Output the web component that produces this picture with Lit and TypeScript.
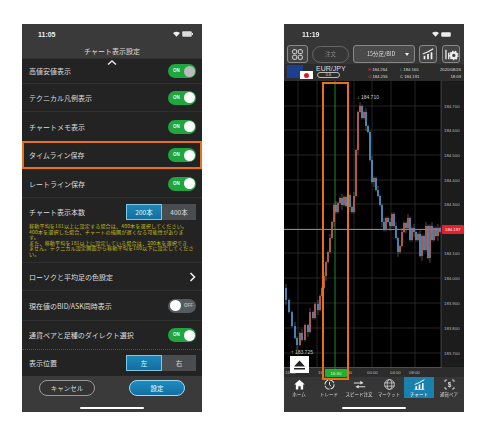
import { LitElement, html, css, svg } from "lit";
import { customElement } from "lit/decorators.js";

const path: [number, number][] = [
  [284,288],[286,300],[289,312],[292,326],[295,338],[297,345],[300,333],[302,340],[305,325],[308,332],[310,312],[313,318],[315,304],[318,310],[320,296],[322,288],[324,276],[326,262],[328,252],[330,238],[332,222],[334,205],[336,212],[338,203],[340,198],[342,205],[344,197],[346,206],[348,195],[350,207],[352,212],[354,196],[356,150],[358,112],[360,106],[362,118],[364,112],[366,126],[368,132],[370,160],[372,182],[374,178],[376,190],[378,196],[380,205],[382,222],[384,230],[386,218],[388,222],[390,226],[392,214],[394,226],[396,238],[398,252],[400,246],[402,232],[404,223],[406,228],[408,218],[410,240],[412,228],[414,232],[416,240],[418,234],[420,256],[422,236],[424,250],[426,226],[428,258],[430,226],[432,240],[434,228],[436,236],[438,228],[440,232],
];
const prices = [[106,"184.700"],[130,"184.600"],[155,"184.500"],[180,"184.400"],[204,"184.300"],[253,"184.100"],[278,"184.000"],[303,"183.900"],[328,"183.800"],[353,"183.700"]] as const;
const hGrid = [106,130,155,180,204,229,253,278,303,328,353];
const vGrid = [298,317,354,372,391,415];
const xLabels = [[285,"16:00"],[318,"16:"],[346,":00"],[367,"00:00"],[390,"04:00"],[409,"08:00"]] as const;

function chart() {
  const candles = path.slice(1).map(([x, y], i) => {
    const prev = path[i][1];
    const up = y < prev;
    const wickT = Math.min(y, prev) - (i % 3 === 0 ? 4 : 1.5);
    const wickB = Math.max(y, prev) + (i % 4 === 0 ? 5 : 1.5);
    return svg`<line x1=${x} x2=${x} y1=${wickT} y2=${wickB} stroke="#999" stroke-width="0.5"/>
      <rect x=${x - 0.85} y=${Math.min(y, prev)} width="1.7" height=${Math.max(Math.abs(y - prev), 1)} fill=${up ? "#c9604e" : "#4a94d0"}/>`;
  });
  return svg`<svg class="chart" viewBox="284 81 180 296" width="180" height="296">
    <rect x="284" y="81" width="180" height="296" fill="#000"/>
    <rect x="441" y="81" width="23" height="296" fill="#1c1c1c"/>
    <rect x="284" y="367" width="180" height="10" fill="#2c2c2c"/>
    <line x1="441" x2="441" y1="81" y2="368" stroke="#666" stroke-width="0.6"/>
    <line x1="284" x2="441" y1="367.5" y2="367.5" stroke="#666" stroke-width="0.6"/>
    ${hGrid.map((y) => svg`<line x1="284" x2="441" y1=${y} y2=${y} stroke="#333" stroke-width="0.7"/>`)}
    ${vGrid.map((x) => svg`<line x1=${x} x2=${x} y1="81" y2="367" stroke="#333" stroke-width="0.7"/>`)}
    <line x1="335" x2="335" y1="81" y2="369" stroke="#1f8a2c" stroke-width="1"/>
    <line x1="284" x2="441" y1="229.5" y2="229.5" stroke="#d99a5f" stroke-width="0.8"/>
    ${candles}
    <text x="357" y="99" class="ann">↓ 184.710</text>
    <text x="291" y="354" class="ann">↑ 183.725</text>
    ${prices.map(([y, t]) => svg`<text x="444" y=${y + 1.5} class="ax">${t}</text>`)}
    <rect x="442" y="225" width="22" height="9" rx="1" fill="#e3202c"/>
    <text x="445" y="231.3" class="ax cur">184.197</text>
    ${xLabels.map(([x, t]) => svg`<text x=${x} y="373.5" class="ax">${t}</text>`)}
    <rect x="325" y="369" width="22" height="8" rx="1" fill="#22b02e"/>
    <text x="336" y="375" class="ax lab" text-anchor="middle">16:30</text>
    <rect x="290" y="356" width="19" height="17" fill="#fff"/>
    <path d="M294 366.5 L299.5 360.5 L305 366.5 Z M294 368 H305 V369.5 H294 Z" fill="#222"/>
  </svg>`;
}

const toggle = (on = true, dim = false) => html`<span class="tg ${on ? "on" : "off"} ${dim ? "dim" : ""}"><i>${on ? "ON" : "OFF"}</i><b></b></span>`;

const tabIcons = [
  svg`<path d="M8 2 L1.5 8 H3.5 V14 H6.5 V10 H9.5 V14 H12.5 V8 H14.5 Z" fill="#fff"/>`,
  svg`<circle cx="8" cy="8" r="5.6" fill="none" stroke="#ddd" stroke-width="1.3" stroke-dasharray="7 1.5"/><path d="M8 4.8 V8.4 L10 10" fill="none" stroke="#ddd" stroke-width="1.2"/>`,
  svg`<path d="M1 5.5 H9 V3.5 L13 6 L9 8 V6.8 H1 Z M15 10 H7 V8.5 L3 10.8 L7 13 V11.5 H15 Z" fill="#ddd"/>`,
  svg`<circle cx="8" cy="8" r="6" fill="none" stroke="#ddd" stroke-width="1"/><ellipse cx="8" cy="8" rx="2.8" ry="6" fill="none" stroke="#ddd" stroke-width="0.9"/><path d="M2 6 H14 M2 10 H14" stroke="#ddd" stroke-width="0.9"/>`,
  svg`<path d="M2 14 H14" stroke="#fff" stroke-width="1"/><path d="M3 10 H5 V13.5 H3 Z M7 8 H9 V13.5 H7 Z M11 6 H13 V13.5 H11 Z" fill="#fff"/><path d="M2 8 Q8 6 14 2" fill="none" stroke="#fff" stroke-width="1.2"/>`,
  svg`<path d="M5 2.5 H2.5 V5 M11 2.5 H13.5 V5 M5 13.5 H2.5 V11 M11 13.5 H13.5 V11" fill="none" stroke="#ddd" stroke-width="1.1"/><text x="8" y="10.5" text-anchor="middle" font-size="8" font-weight="700" fill="#ddd" font-family="Liberation Sans, sans-serif">$</text>`,
];
const tabs = ["ホーム", "トレード", "スピード注文", "マーケット", "チャート", "通貨ペア"];

@customElement("app-root")
export class AppRoot extends LitElement {
  static styles = css`
    :host { display: block; width: 500px; height: 439px; background: #fff; overflow: hidden;
      font-family: "Noto Sans CJK JP", "Liberation Sans", sans-serif; }
    .page { display: flex; padding: 24px 0 0 22px; gap: 82px; filter: blur(0.4px); }
    .phone { position: relative; display: flex; flex-direction: column; width: 180px; height: 388px; overflow: hidden; color: #ddd; }
    .left { background: #3a3a3a; }
    .right { background: #363636; }
    .status { display: flex; align-items: center; justify-content: space-between; height: 20px; padding: 0 9px 0 16px;
      font: 700 7px "Liberation Sans", sans-serif; color: #eee; flex: none; }
    .right .status { padding: 0 12px 0 18px; }
    .sicons { display: flex; align-items: center; gap: 2px; }
    .title { height: 14px; flex: none; text-align: center; font-size: 7px; line-height: 14px; color: #ddd; }
    .list { flex: none; display: grid; grid-template-rows: 25px 28px 30px 28px 28px 65px 28px 30px 29px 27px; background: #232323; position: relative; }
    .row { display: flex; align-items: center; justify-content: space-between; padding: 0 6px 0 7px; font-size: 7px;
      border-top: 1px solid #2f2f2f; box-sizing: border-box; color: #ddd; }
    .row.hl { outline: 2px solid #e9701b; outline-offset: -2px; border-top: none; }
    .row.dot { border-top: 1px dotted #555; }
    .row.cols { display: block; padding-top: 6px; }
    .rowtop { display: flex; align-items: center; justify-content: space-between; }
    .chev { position: absolute; left: 85px; top: 2px; }
    .tg { position: relative; display: block; width: 28px; height: 14px; border-radius: 7px; flex: none; }
    .tg.on { background: #21a53f; }
    .tg.off { background: #565b60; }
    .tg b { position: absolute; top: 1.5px; width: 11px; height: 11px; border-radius: 50%; background: #fff; }
    .tg.dim b { background: #bbb; }
    .tg.on b { right: 1.5px; }
    .tg.off b { left: 1.5px; }
    .tg i { position: absolute; top: 0; font: 700 4.5px/14px "Liberation Sans", sans-serif; color: #dfe; }
    .tg.on i { left: 5px; }
    .tg.off i { right: 3px; color: #bbb; }
    .seg { display: flex; width: 70px; height: 16px; flex: none; }
    .seg span { flex: 1; display: flex; align-items: center; justify-content: center; background: #4a4d50; font-size: 6.5px; color: #ddd; }
    .seg .act { background: linear-gradient(#1f86b8, #126f9f); border: 1px solid #7cc6e8; box-sizing: border-box; color: #dff; }
    .note { margin: 3px 0 0; font-size: 5.1px; letter-spacing: 0.12px; line-height: 5.5px; color: #c4bb1d; white-space: nowrap; }
    .footer { flex: 1; display: flex; justify-content: center; gap: 34px; padding-top: 4px; background: #3a3a3a; }
    .btn { width: 56px; height: 16px; box-sizing: border-box; border-radius: 8px; display: flex; align-items: center; justify-content: center; font-size: 6.5px; }
    .btn.c { border: 1px solid #999; background: #333; }
    .btn.p { border: 1px solid #9bdcf5; background: linear-gradient(#1e8cc0, #126f9f); color: #eff; }
    .bar { position: absolute; bottom: 3px; left: 58px; width: 64px; height: 2px; background: #fff; border-radius: 1px; }
    .tools { height: 20px; display: flex; align-items: center; flex: none; padding-left: 3px; gap: 4px; }
    .tb { width: 18px; height: 18px; box-sizing: border-box; border: 1px solid #888; border-radius: 3px; background: #444; display: flex; align-items: center; justify-content: center; flex: none; }
    .tb.wide { width: 21px; }
    .tb.gear { margin-left: 1px; }
    .pill { width: 37px; height: 17px; box-sizing: border-box; border: 1px solid #666; border-radius: 9px; font-size: 5.5px; color: #888; display: flex; align-items: center; justify-content: center; flex: none; }
    .sel { width: 62px; height: 18px; box-sizing: border-box; border: 1px solid #888; border-radius: 3px; background: #4a4a4a; font-size: 5.5px; display: flex; align-items: center; justify-content: space-between; padding: 0 5px 0 13px; flex: none; }
    .sel u { width: 0; height: 0; border: 2.5px solid transparent; border-top: 3px solid #eee; border-bottom: 0; }
    .info { height: 17px; flex: none; display: flex; background: #2c2c2c; font: 5px "Liberation Sans", sans-serif; }
    .flags { width: 32px; position: relative; flex: none; }
    .eu { position: absolute; left: 3px; top: 1px; width: 16px; height: 13px; background: #1d3f8f; }
    .jp { position: absolute; left: 16px; top: 7px; width: 13px; height: 8px; background: #fff; display: flex; align-items: center; justify-content: center; }
    .jp::after { content: ""; width: 5px; height: 5px; border-radius: 50%; background: #d0202a; }
    .sym { width: 52px; flex: none; font-size: 7px; line-height: 7px; padding-top: 1px; color: #ddd; }
    .sp { display: block; width: 23px; height: 6px; border: 1px solid #bbb; border-radius: 3px; font-size: 4px; line-height: 4px; text-align: center; box-sizing: border-box; margin: 0 0 0 1px; }
    .ohlc { flex: none; display: grid; grid-template-columns: 32px auto; align-content: center; font-size: 4.2px; line-height: 7px; white-space: nowrap; }
    .ohlc em { font-style: normal; color: #e33; }
    .ohlc em.b { color: #3a9ad9; }
    .date { flex: 1; text-align: right; font-size: 4.2px; line-height: 7px; align-self: center; white-space: nowrap; padding-right: 3px; }
    .chart { display: block; flex: none; height: 296px; }
    .ax { font: 4.3px "Liberation Sans", sans-serif; fill: #bbb; }
    .cur { fill: #fff; }
    .lab { fill: #dfd; }
    .ann { font: 5px "Liberation Sans", sans-serif; fill: #ccc; }
    .tabbar { position: absolute; left: 0; right: 0; top: 353px; height: 21px; display: grid; grid-template-columns: repeat(6, 1fr); }
    .tab { display: flex; flex-direction: column; align-items: center; justify-content: center; font-size: 4.5px; line-height: 6px; color: #ddd; white-space: nowrap; }
    .tab.act { background: #1881ad; color: #fff; }
    .tab svg { display: block; width: 13px; height: 13px; }
    .box { position: absolute; left: 38px; top: 58px; width: 27px; height: 298px; box-sizing: border-box; border: 2px solid #e9701b; }
  `;

  render() {
    return html`<div class="page">
      <section class="phone left">
        <div class="status"><span>11:05</span><span class="sicons">
          <svg width="7" height="6" viewBox="0 0 14 11"><path d="M7 11 L0 3.5 Q7 -2 14 3.5 Z" fill="#eee"/></svg>
          <svg width="11" height="6" viewBox="0 0 22 12"><rect x="0.5" y="0.5" width="19" height="11" rx="2" fill="#ddd"/><rect x="20" y="4" width="2" height="4" fill="#ddd"/></svg>
        </span></div>
        <div class="title">チャート表示設定</div>
        <div class="list">
          <svg class="chev" width="10" height="5" viewBox="0 0 10 5"><path d="M1 4.5 L5 1 L9 4.5" fill="none" stroke="#ddd" stroke-width="1.6"/></svg>
          <div class="row">高値安値表示${toggle(true, true)}</div>
          <div class="row">テクニカル凡例表示${toggle()}</div>
          <div class="row">チャートメモ表示${toggle()}</div>
          <div class="row hl">タイムライン保存${toggle()}</div>
          <div class="row">レートライン保存${toggle()}</div>
          <div class="row cols">
            <div class="rowtop">チャート表示本数<span class="seg"><span class="act">200本</span><span>400本</span></span></div>
            <p class="note">移動平均を181以上に設定する場合は、400本を選択してください。<br>400本を選択した場合、チャートの描画が遅くなる可能性がありま<br>す。<br>また、移動平均を181以上に設定している場合は、200本を選択でき<br>ません。テクニカル設定画面から移動平均を180以下に設定してくださ<br>い。</p>
          </div>
          <div class="row">ローソクと平均足の色設定<svg width="7" height="10" viewBox="0 0 7 10"><path d="M1.5 1 L5.5 5 L1.5 9" fill="none" stroke="#eee" stroke-width="1.6"/></svg></div>
          <div class="row">現在値のBID/ASK同時表示${toggle(false)}</div>
          <div class="row">通貨ペアと足種のダイレクト選択${toggle()}</div>
          <div class="row dot">表示位置<span class="seg"><span class="act">左</span><span>右</span></span></div>
        </div>
        <div class="footer"><span class="btn c">キャンセル</span><span class="btn p">設定</span></div>
        <div class="bar"></div>
      </section>

      <section class="phone right">
        <div class="status"><span>11:19</span><span class="sicons">
          <svg width="7" height="6" viewBox="0 0 14 11"><path d="M7 11 L0 3.5 Q7 -2 14 3.5 Z" fill="#eee"/></svg>
          <svg width="11" height="5" viewBox="0 0 22 10"><rect x="0.5" y="0.5" width="19" height="9" rx="2" fill="#eee"/></svg>
        </span></div>
        <div class="tools">
          <span class="tb wide"><svg width="11" height="11" viewBox="0 0 11 11"><g fill="none" stroke="#ddd"><rect x="0.7" y="0.7" width="4" height="4" rx="1"/><rect x="6.3" y="0.7" width="4" height="4" rx="1"/><rect x="0.7" y="6.3" width="4" height="4" rx="1"/><rect x="6.3" y="6.3" width="4" height="4" rx="1"/></g></svg></span>
          <span class="pill">注文</span>
          <span class="sel">15分足/BID<u></u></span>
          <span class="tb"><svg width="14" height="14" viewBox="0 0 16 16"><path d="M3 10 H5 V14 H3 Z M7 8 H9 V14 H7 Z M11 6 H13 V14 H11 Z" fill="#eee"/><path d="M2 8 Q8 6 14 2" fill="none" stroke="#eee" stroke-width="1.3"/></svg></span>
          <span class="tb gear"><svg width="15" height="13" viewBox="0 0 16 14"><path d="M2 12 V2 M5 12 V5" stroke="#eee" stroke-width="1.4"/><circle cx="10.5" cy="8" r="3" fill="none" stroke="#eee" stroke-width="2.4"/><circle cx="10.5" cy="8" r="4.6" fill="none" stroke="#eee" stroke-width="1.2" stroke-dasharray="1.6 1.6"/></svg></span>
        </div>
        <div class="info">
          <div class="flags"><span class="eu"></span><span class="jp"></span></div>
          <div class="sym">EUR/JPY<span class="sp">0.6</span></div>
          <div class="ohlc"><span><em>H</em> 184.264</span><span><em class="b">L</em> 184.160</span><span><em>O</em> 184.255</span><span>C 184.191</span></div>
          <div class="date">2020/08/26<br>18:09</div>
        </div>
        ${chart()}
        <div class="tabbar">
          ${tabs.map((t, i) => html`<div class="tab ${i === 4 ? "act" : ""}"><svg viewBox="0 0 16 16">${tabIcons[i]}</svg>${t}</div>`)}
        </div>
        <div class="box"></div>
        <div class="bar"></div>
      </section>
    </div>`;
  }
}
